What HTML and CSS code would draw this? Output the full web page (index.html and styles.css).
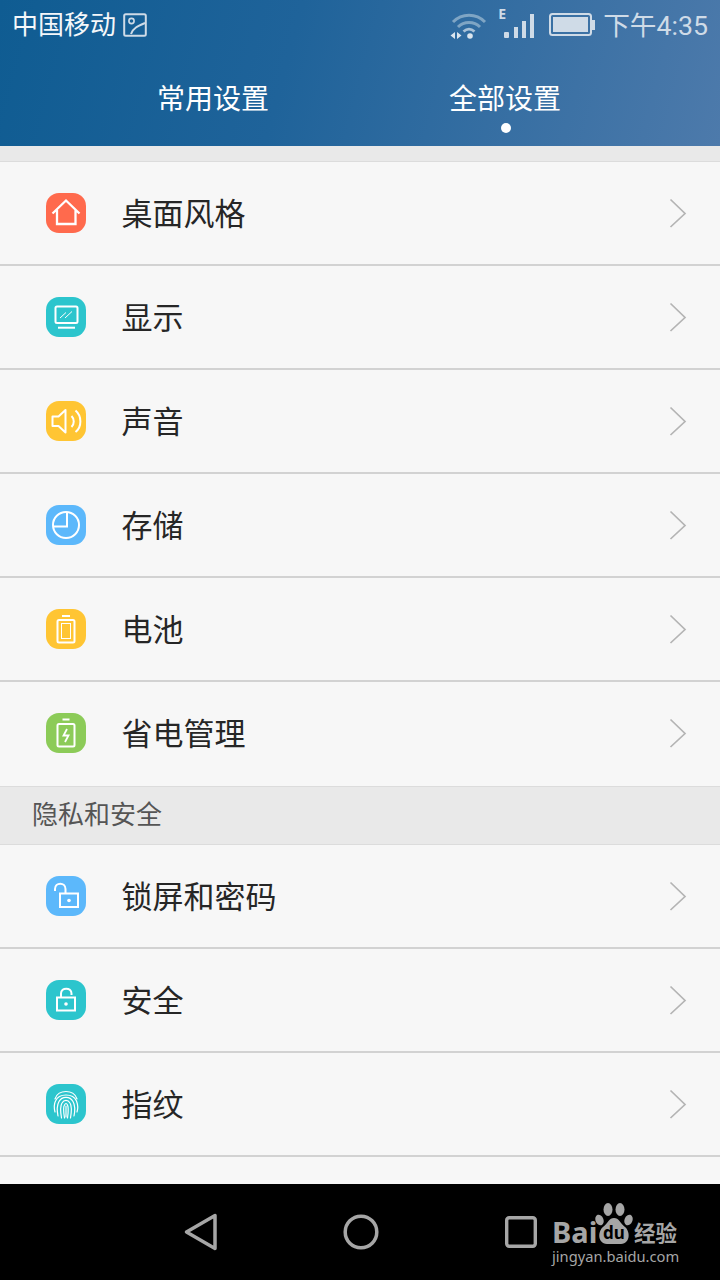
FILE: index.html
```html
<!DOCTYPE html>
<html lang="zh-CN">
<head>
<meta charset="utf-8">
<title>设置</title>
<link rel="stylesheet" href="styles.css">
</head>
<body>
<div class="page">
  <header class="header">
    <div class="status">
      <div class="status-left">
        <span class="carrier">中国移动</span>
        <svg class="pic" width="24" height="24" viewBox="0 0 24 24"><rect x="1.200" y="1.200" width="21.600" height="21.600" rx="1.500" fill="none" stroke="#cfdbe7" stroke-width="2"/><circle cx="8.500" cy="8" r="2.600" fill="none" stroke="#cfdbe7" stroke-width="1.600"/><path d="M8 21C10 15 15 13 22 10" fill="none" stroke="#cfdbe7" stroke-width="2"/></svg>
      </div>
      <div class="status-right">
        <svg class="wifi" width="38" height="28" viewBox="0 0 38 28"><g fill="none" stroke="#7fa5c4" stroke-width="3"><path d="M3 11C12 2 26 2 35 11"/><path d="M8 16C14 10 24 10 30 16"/></g><path d="M13.500 20.500C17 17.500 21 17.500 24.500 20.500" fill="none" stroke="#a9c2d8" stroke-width="2.800"/><circle cx="20" cy="25" r="2.800" fill="#dbe5ee"/><path d="M5 21v7l-4.500-3.500zM7 21v7l4.500-3.500z" fill="#dbe5ee"/></svg>
        <div class="signal">
          <span class="edge">E</span>
          <svg width="30" height="24" viewBox="0 0 30 24"><g fill="#cfdbe7"><rect x="0" y="18" width="5" height="6" rx="1"/><rect x="10" y="13" width="4" height="11"/><rect x="18" y="7" width="4" height="17"/><rect x="26" y="0" width="4" height="24"/></g></svg>
        </div>
        <svg class="battery" width="46" height="24" viewBox="0 0 46 24"><rect x="1" y="1" width="41" height="21" rx="2.500" fill="none" stroke="#cfdbe7" stroke-width="2"/><rect x="4" y="4" width="35" height="15" fill="#cfdbe7"/><rect x="43" y="7" width="3" height="10" fill="#cfdbe7"/></svg>
        <span class="time">下午4:35</span>
      </div>
    </div>
    <nav class="tabs">
      <div class="tab">常用设置</div>
      <div class="tab tab-active">全部设置</div>
    </nav>
  </header>

  <main class="list">
    <div class="spacer"></div>

    <div class="row">
      <span class="icon icon-red"><svg viewBox="0 0 40 40"><path d="M6.500 20.500L20 7.500L33.500 20.500M11 17V31H29.500V17" fill="none" stroke="#fff" stroke-width="2.300"/></svg></span>
      <span class="label">桌面风格</span>
      <svg class="chevron" viewBox="0 0 18 30"><path d="M1.500 1.500L16 15.500L1.500 29" fill="none" stroke="#b4b4b4" stroke-width="1.700"/></svg>
    </div>

    <div class="row">
      <span class="icon icon-teal"><svg viewBox="0 0 40 40"><rect x="9.500" y="9.500" width="22" height="16.500" rx="1.500" fill="none" stroke="#fff" stroke-width="2"/><path d="M12 30.700H29" stroke="#fff" stroke-width="2"/><path d="M14 21L20 15.500M19 21L26 14.500" stroke="#fff" stroke-width="1" fill="none"/></svg></span>
      <span class="label">显示</span>
      <svg class="chevron" viewBox="0 0 18 30"><path d="M1.500 1.500L16 15.500L1.500 29" fill="none" stroke="#b4b4b4" stroke-width="1.700"/></svg>
    </div>

    <div class="row">
      <span class="icon icon-amber"><svg viewBox="0 0 40 40"><path d="M6.500 15.500H12.500L19.500 9V31.500L12.500 25H6.500Z" fill="none" stroke="#fff" stroke-width="2" stroke-linejoin="round"/><path d="M25.500 15C28.500 18 28.500 23 25.500 26M29.500 9.500C36 15 36 26 29.500 31" fill="none" stroke="#fff" stroke-width="2"/></svg></span>
      <span class="label">声音</span>
      <svg class="chevron" viewBox="0 0 18 30"><path d="M1.500 1.500L16 15.500L1.500 29" fill="none" stroke="#b4b4b4" stroke-width="1.700"/></svg>
    </div>

    <div class="row">
      <span class="icon icon-blue"><svg viewBox="0 0 40 40"><circle cx="20" cy="20" r="13" fill="none" stroke="#fff" stroke-width="2"/><path d="M7 21.500H21V7" fill="none" stroke="#fff" stroke-width="2"/></svg></span>
      <span class="label">存储</span>
      <svg class="chevron" viewBox="0 0 18 30"><path d="M1.500 1.500L16 15.500L1.500 29" fill="none" stroke="#b4b4b4" stroke-width="1.700"/></svg>
    </div>

    <div class="row">
      <span class="icon icon-amber"><svg viewBox="0 0 40 40"><path d="M16 7H24" stroke="#fff" stroke-width="2"/><rect x="11.500" y="11" width="17" height="22.500" rx="1.500" fill="none" stroke="#fff" stroke-width="2"/><rect x="15.500" y="14.500" width="9" height="15" fill="none" stroke="#fff" stroke-width="1"/></svg></span>
      <span class="label">电池</span>
      <svg class="chevron" viewBox="0 0 18 30"><path d="M1.500 1.500L16 15.500L1.500 29" fill="none" stroke="#b4b4b4" stroke-width="1.700"/></svg>
    </div>

    <div class="row row-last">
      <span class="icon icon-green"><svg viewBox="0 0 40 40"><path d="M16.500 6.500H23.500" stroke="#fff" stroke-width="2"/><rect x="11.500" y="11" width="17" height="22.500" rx="1.500" fill="none" stroke="#fff" stroke-width="2"/><path d="M21 16L17.500 22.500H22.500L19 29" fill="none" stroke="#fff" stroke-width="1.800"/></svg></span>
      <span class="label">省电管理</span>
      <svg class="chevron" viewBox="0 0 18 30"><path d="M1.500 1.500L16 15.500L1.500 29" fill="none" stroke="#b4b4b4" stroke-width="1.700"/></svg>
    </div>

    <div class="section">隐私和安全</div>

    <div class="row">
      <span class="icon icon-blue"><svg viewBox="0 0 40 40"><rect x="14" y="17.500" width="18" height="13.500" fill="none" stroke="#fff" stroke-width="2"/><circle cx="23" cy="24.500" r="1.800" fill="#fff"/><path d="M9 15V13C9 6 19.500 6 19.500 13V17.500" fill="none" stroke="#fff" stroke-width="2"/></svg></span>
      <span class="label">锁屏和密码</span>
      <svg class="chevron" viewBox="0 0 18 30"><path d="M1.500 1.500L16 15.500L1.500 29" fill="none" stroke="#b4b4b4" stroke-width="1.700"/></svg>
    </div>

    <div class="row">
      <span class="icon icon-teal"><svg viewBox="0 0 40 40"><rect x="11" y="17.500" width="18" height="13" fill="none" stroke="#fff" stroke-width="2"/><circle cx="20" cy="24" r="1.800" fill="#fff"/><path d="M15 17.500V13.500C15 7 25.500 7 25.500 13.500V15" fill="none" stroke="#fff" stroke-width="2"/></svg></span>
      <span class="label">安全</span>
      <svg class="chevron" viewBox="0 0 18 30"><path d="M1.500 1.500L16 15.500L1.500 29" fill="none" stroke="#b4b4b4" stroke-width="1.700"/></svg>
    </div>

    <div class="row">
      <span class="icon icon-teal"><svg viewBox="0 0 40 40"><g fill="none" stroke="#fff" stroke-width="1.200" stroke-linecap="round"><path d="M9 15C12 5 28 5 31 15"/><path d="M9 28C8 24 8 20 9.500 17C13 9 27 9 30.500 17C32 21 32 25 31 28"/><path d="M12 32C11 27 11 21 13 17.500C16 12 24 12 27 17.500C29 21 29 27 28 32"/><path d="M15.500 34C14.500 28 14 22 16 19C18 15.500 22 15.500 24 19C26 22 25.500 28 24.500 34"/><path d="M18.500 34C17.500 28 17 23 18.500 21C19.500 19 20.500 19 21.500 21C23 24 22 30 21.500 34"/><path d="M20 22V33"/></g></svg></span>
      <span class="label">指纹</span>
      <svg class="chevron" viewBox="0 0 18 30"><path d="M1.500 1.500L16 15.500L1.500 29" fill="none" stroke="#b4b4b4" stroke-width="1.700"/></svg>
    </div>
  </main>

  <footer class="navbar">
    <svg class="nav-back" width="34" height="38" viewBox="0 0 34 38"><path d="M31 2.500V35.500L2.500 19Z" fill="none" stroke="#a6a6a6" stroke-width="3.500" stroke-linejoin="round"/></svg>
    <svg class="nav-home" width="36" height="36" viewBox="0 0 36 36"><circle cx="18" cy="18" r="15.800" fill="none" stroke="#a6a6a6" stroke-width="3.500"/></svg>
    <svg class="nav-recent" width="32" height="32" viewBox="0 0 32 32"><rect x="1.700" y="1.700" width="28.600" height="28.600" rx="2.500" fill="none" stroke="#a6a6a6" stroke-width="3.400"/></svg>
    <div class="watermark">
      <div class="wm-top">
        <span class="wm-bai">Bai</span>
        <svg class="wm-paw" width="38" height="42" viewBox="0 0 38 42"><g fill="#a6a6a6"><ellipse cx="4.500" cy="17" rx="4" ry="5.500" transform="rotate(-20 4.500 17)"/><ellipse cx="13" cy="6.500" rx="4.500" ry="6.500"/><ellipse cx="25" cy="6.500" rx="4.500" ry="6.500"/><ellipse cx="33.500" cy="17" rx="4" ry="5.500" transform="rotate(20 33.500 17)"/><path d="M19 15C14 15 13 20 8 24C3 28 2 40 12 41C16 41 22 41 26 41C36 40 35 28 30 24C25 20 24 15 19 15Z"/></g></svg>
        <span class="wm-du">du</span>
        <span class="wm-cn">经验</span>
      </div>
      <div class="wm-url">jingyan.baidu.com</div>
    </div>
  </footer>
</div>
</body>
</html>
```

FILE: styles.css
```css
* { box-sizing: border-box; }
html, body { margin: 0; padding: 0; }
body { font-family: "Noto Sans CJK SC", "Noto Sans", sans-serif; background: #000; }
.page { width: 720px; height: 1280px; display: flex; flex-direction: column; overflow: hidden; }

.header { height: 146px; flex: none; background: linear-gradient(105deg, #0f5c92 0%, #1f639a 40%, #4d7aab 100%); color: #fff; }
.status { height: 50px; display: flex; justify-content: space-between; align-items: center; padding: 0 12px 0 12px; }
.status-left { display: flex; align-items: center; gap: 7px; }
.carrier { font-size: 26px; line-height: 46px; margin-bottom: 4px; color: #f4f7fa; }
.pic { margin-bottom: 1px; }
.status-right { display: flex; align-items: center; }
.wifi { margin-right: 16px; }
.signal { position: relative; width: 30px; height: 24px; margin-top: 1px; margin-right: 15px; }
.signal svg { display: block; }
.edge { position: absolute; left: -6px; top: -7px; font: bold 14px/14px "Noto Sans", sans-serif; color: #cfdbe7; }
.battery { margin-right: 8px; }
.time { font-family: Roboto, "Noto Sans CJK SC", sans-serif; font-size: 26.700px; line-height: 50px; color: #cfdbe7; padding-top: 1px; }

.tabs { height: 96px; display: flex; justify-content: center; gap: 180px; padding-right: 2px; }
.tab { position: relative; width: 112px; font-size: 28px; line-height: 94px; height: 96px; white-space: nowrap; }
.tab-active::after { content: ""; position: absolute; left: 52px; top: 73px; width: 10px; height: 10px; border-radius: 50%; background: #fff; }

.list { flex: 1; min-height: 0; overflow: hidden; background: #f7f7f7; }
.spacer { height: 16px; background: #e9e9e9; border-bottom: 1px solid #dcdcdc; }
.row { height: 104px; display: flex; align-items: center; padding: 0 33px 0 46px; border-bottom: 2px solid #d2d2d2; background: #f7f7f7; }
.row-last { height: 105px; padding-bottom: 2px; border-bottom: 1px solid #dcdcdc; }
.icon { flex: none; width: 40px; height: 40px; border-radius: 13px; display: block; }
.icon svg { display: block; width: 40px; height: 40px; }
.icon-red { background: #ff6a4d; }
.icon-teal { background: #2cc5cd; }
.icon-amber { background: #ffc533; }
.icon-blue { background: #5cb8fb; }
.icon-green { background: #8ccb58; }
.label { flex: 1; margin-left: 35.500px; font-size: 31px; line-height: 40px; padding-bottom: 3px; height: 43px; color: #262626; }
.chevron { flex: none; width: 18px; height: 30px; }
.section { height: 58px; padding-left: 32px; font-size: 26px; line-height: 51px; color: #555; background: #e9e9e9; border-bottom: 1px solid #dcdcdc; }

.navbar { position: relative; height: 96px; flex: none; background: #000; }
.nav-back, .nav-home, .nav-recent { position: absolute; }
.nav-back { left: 184px; top: 29px; }
.nav-home { left: 343px; top: 30px; }
.nav-recent { left: 505px; top: 32px; }
.watermark { position: absolute; left: 552px; top: 18px; width: 130px; color: #a6a6a6; }
.wm-top { position: relative; height: 44px; }
.wm-bai { position: absolute; left: 0; top: 17px; font: bold 29px/26px "Noto Sans", sans-serif; }
.wm-paw { position: absolute; left: 43px; top: 1px; }
.wm-du { position: absolute; left: 49px; top: 23px; width: 26px; text-align: center; font: bold 17px/16px "Noto Sans", sans-serif; color: #000; }
.wm-cn { position: absolute; left: 82px; top: 18px; font-size: 21.500px; line-height: 24px; font-weight: 700; }
.wm-url { font: 14.700px/18px "Noto Sans", sans-serif; margin-top: 1px; white-space: nowrap; }
```
